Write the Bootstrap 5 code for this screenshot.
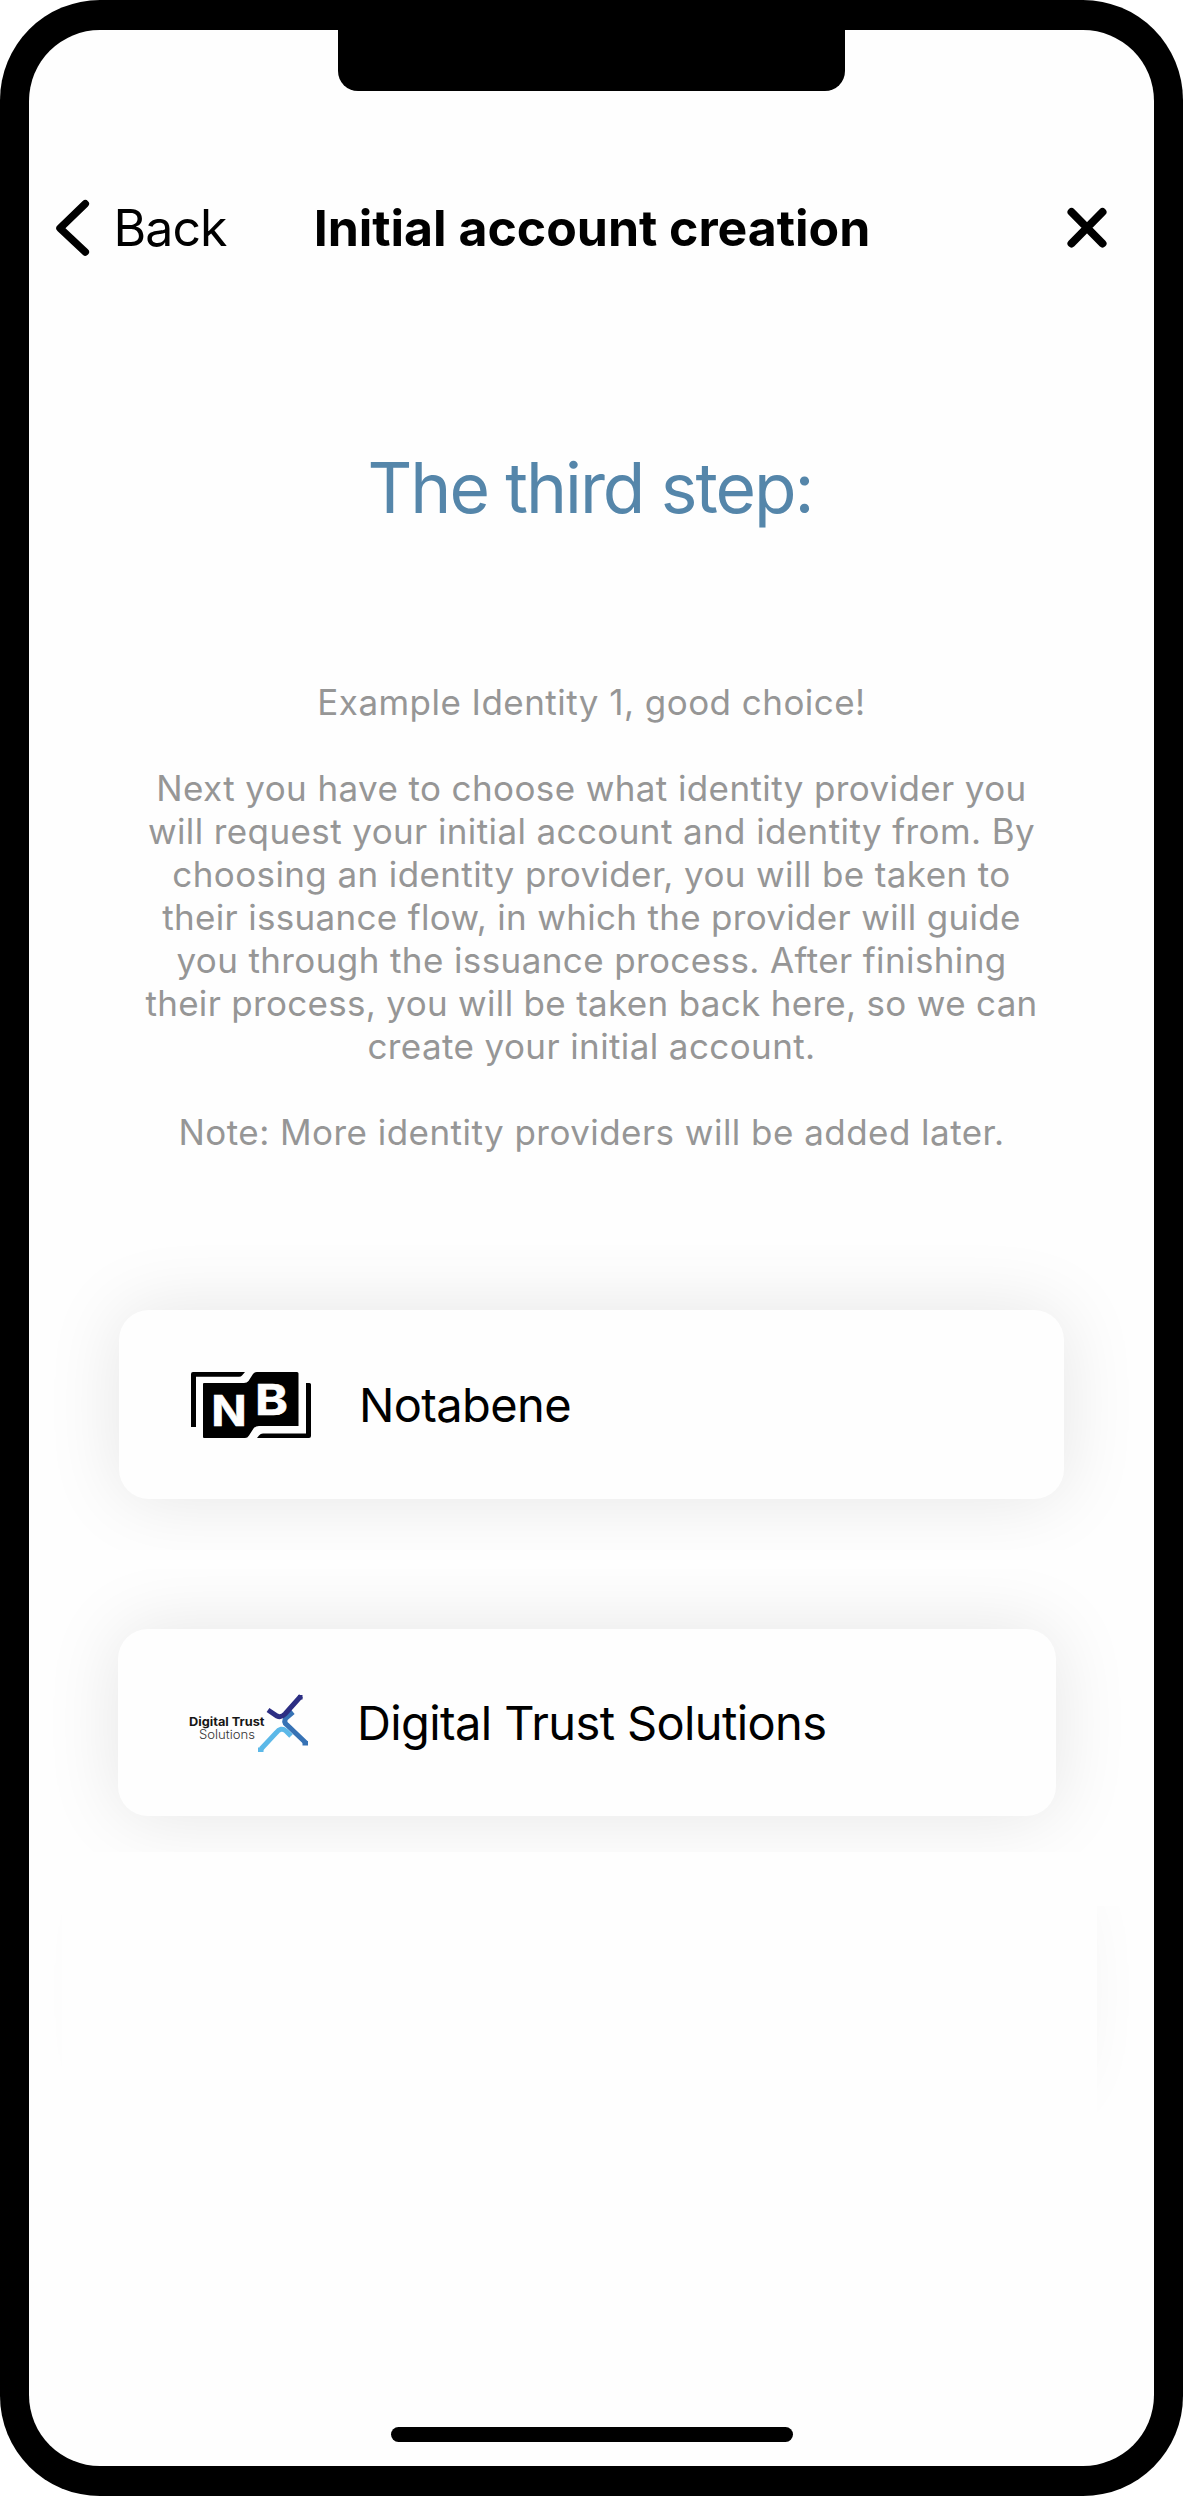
<!DOCTYPE html>
<html lang="en">
<head>
<meta charset="utf-8">
<meta name="viewport" content="width=device-width, initial-scale=1">
<title>Initial account creation</title>
<link href="https://cdn.jsdelivr.net/npm/bootstrap@5.3.0/dist/css/bootstrap.min.css" rel="stylesheet">
<style>
body { background: #fff; font-family: Inter, "Liberation Sans", sans-serif; color: #000; }
.phone { width: 1183px; height: 2496px; background: #000; border-radius: 100px; padding: 30px 29px; }
.screen { background: #fefefe; border-radius: 71px; }
.notch { width: 507px; height: 61px; left: 309px; top: 0; background: #000; border-radius: 0 0 20px 20px; }
.topbar { margin-top: 168px; height: 60px; font-size: 50px; line-height: 60px; padding: 0 45px 0 24px; }
.topbar .btn { font-size: 50px; line-height: 60px; letter-spacing: -.95px; color: #000; }
.topbar .btn span { margin-left: 20.5px; }
.topbar h1 { font-size: 50px; line-height: 60px; letter-spacing: -.03px; left: 1px; right: 0; top: 0; }
.step-title { margin-top: 188px; padding-right: 3px; font-size: 69.5px; line-height: 84px; letter-spacing: -2.05px; color: #5586aa; }
.copy { margin-top: 151px; font-size: 35px; line-height: 43px; color: #969696; white-space: nowrap; letter-spacing: .39px; }
.copy p { margin-bottom: 43px; }
.copy span { display: block; }
.ls-wide { letter-spacing: .46px; }
.ls-tight { letter-spacing: .31px; }
.provider { border: 0; border-radius: 30px; background: #fefefe; box-shadow: 0 0 76px rgba(0,0,0,.1); font-size: 47px; line-height: 56px; letter-spacing: -.62px; color: #000; }
.provider-a { width: 945px; height: 189px; margin: 156px 0 0 90px; padding-left: 72px; clip-path: inset(-80px -80px -51px -80px); }
.provider-a span { margin-left: 48px; padding-top: 1px; }
.provider-b { width: 938px; height: 187px; margin: 130px 0 0 89px; padding-left: 71px; clip-path: inset(-60px -80px -36px -80px); }
.provider-b span { margin-left: 47px; }
.provider-c { width: 945px; height: 189px; margin: 80px 0 0 90px; clip-path: path("M978 10H1040V240H978ZM-72 10H-57V240H-72Z"); }
.home-bar { width: 402px; height: 15px; border-radius: 8px; background: #000; margin-bottom: 24px; }
</style>
</head>
<body>
<div class="phone">
  <main class="screen position-relative d-flex flex-column h-100 overflow-hidden">
    <div class="notch position-absolute"></div>
    <header class="topbar position-relative d-flex align-items-center justify-content-between">
      <button class="btn p-0 border-0 d-flex align-items-center position-relative z-1" type="button">
        <svg width="40" height="60" viewBox="0 0 40 60" fill="none" stroke="#000" stroke-width="7.5" stroke-linecap="round" stroke-linejoin="round" aria-hidden="true"><path d="M32.3 5.8 7 30.2 32.3 54"/></svg>
        <span>Back</span>
      </button>
      <h1 class="position-absolute text-center fw-bold m-0">Initial account creation</h1>
      <button class="btn p-0 border-0 d-flex position-relative z-1" type="button" aria-label="Close">
        <svg width="44" height="44" viewBox="0 0 44 44" stroke="#000" stroke-width="8" stroke-linecap="round" aria-hidden="true"><path d="M6.5 6 37.5 37.5M37.5 6 6.5 37.5"/></svg>
      </button>
    </header>

    <h2 class="step-title text-center fw-normal mb-0">The third step:</h2>

    <section class="copy text-center">
      <p class="ls-wide">Example Identity 1, good choice!</p>
      <p>
        <span>Next you have to choose what identity provider you</span>
        <span>will request your initial account and identity from. By</span>
        <span>choosing an identity provider, you will be taken to</span>
        <span class="ls-tight">their issuance flow, in which the provider will guide</span>
        <span>you through the issuance process. After finishing</span>
        <span class="ls-tight">their process, you will be taken back here, so we can</span>
        <span>create your initial account.</span>
      </p>
      <p class="ls-wide mb-0">Note: More identity providers will be added later.</p>
    </section>

    <a class="provider provider-a card flex-row align-items-center text-decoration-none" href="#">
      <svg width="120" height="66" viewBox="0 0 120 66" aria-hidden="true">
        <path d="M0 55V2Q0 0 2 0H54L51 3.5Q50 4.700 48 4.700H5V55Z"/>
        <path d="M12 12Q12 11 13 11H53Q56 11 57.500 9L62 2Q63.500 0 66 0H106Q107.500 0 107.500 1.500V54H68Q64.500 54 62.500 56.500L58 63.500Q56.500 66 54 66H13Q12 66 12 65Z"/>
        <path d="M115 11H118.500Q120 11 120 12.500V64Q120 66 118 66H66L68 63.500Q69.500 61.500 72 61.500H115Z"/>
        <g fill="#fefefe" stroke="#fefefe" stroke-width=".6" font-family="Inter, sans-serif" font-weight="700" font-size="43" letter-spacing="0">
          <text x="20.300" y="54.300" textLength="35.500" lengthAdjust="spacingAndGlyphs">N</text>
          <text x="64" y="43" textLength="33" lengthAdjust="spacingAndGlyphs">B</text>
        </g>
      </svg>
      <span>Notabene</span>
    </a>

    <a class="provider provider-b card flex-row align-items-center text-decoration-none" href="#">
      <svg width="121" height="66" viewBox="0 0 121 66" fill="none" letter-spacing="0" aria-hidden="true">
        <text x="0" y="35.500" fill="#161616" font-family="Inter, sans-serif" font-weight="700" font-size="12" textLength="75.500" lengthAdjust="spacingAndGlyphs">Digital Trust</text>
        <text x="10" y="49" fill="#333" font-family="Inter, sans-serif" font-weight="300" font-size="12.500" textLength="56" lengthAdjust="spacingAndGlyphs">Solutions</text>
        <g stroke-width="5">
          <path d="M104 22 97 28Q94 32 98 35L117 53" stroke="#3672b5"/>
          <path d="M79 20 88 26Q92 28 96 24L112 6" stroke="#2c2e83"/>
          <path d="M72 59 87 43Q92 36.500 97 41L102 46" stroke="#5bb8e8"/>
        </g>
        <path d="M109 5h4.500v4.500h-4.500z" fill="#2c2e83"/>
        <path d="M113.500 51h5.500v4.500h-5.500z" fill="#3672b5"/>
        <path d="M69 57.500h5.500v4.500h-5.500z" fill="#5bb8e8"/>
      </svg>
      <span>Digital Trust Solutions</span>
    </a>

    <div class="provider provider-c"></div>

    <div class="home-bar mt-auto align-self-center"></div>
  </main>
</div>
<script src="https://cdn.jsdelivr.net/npm/bootstrap@5.3.0/dist/js/bootstrap.bundle.min.js"></script>
</body>
</html>
